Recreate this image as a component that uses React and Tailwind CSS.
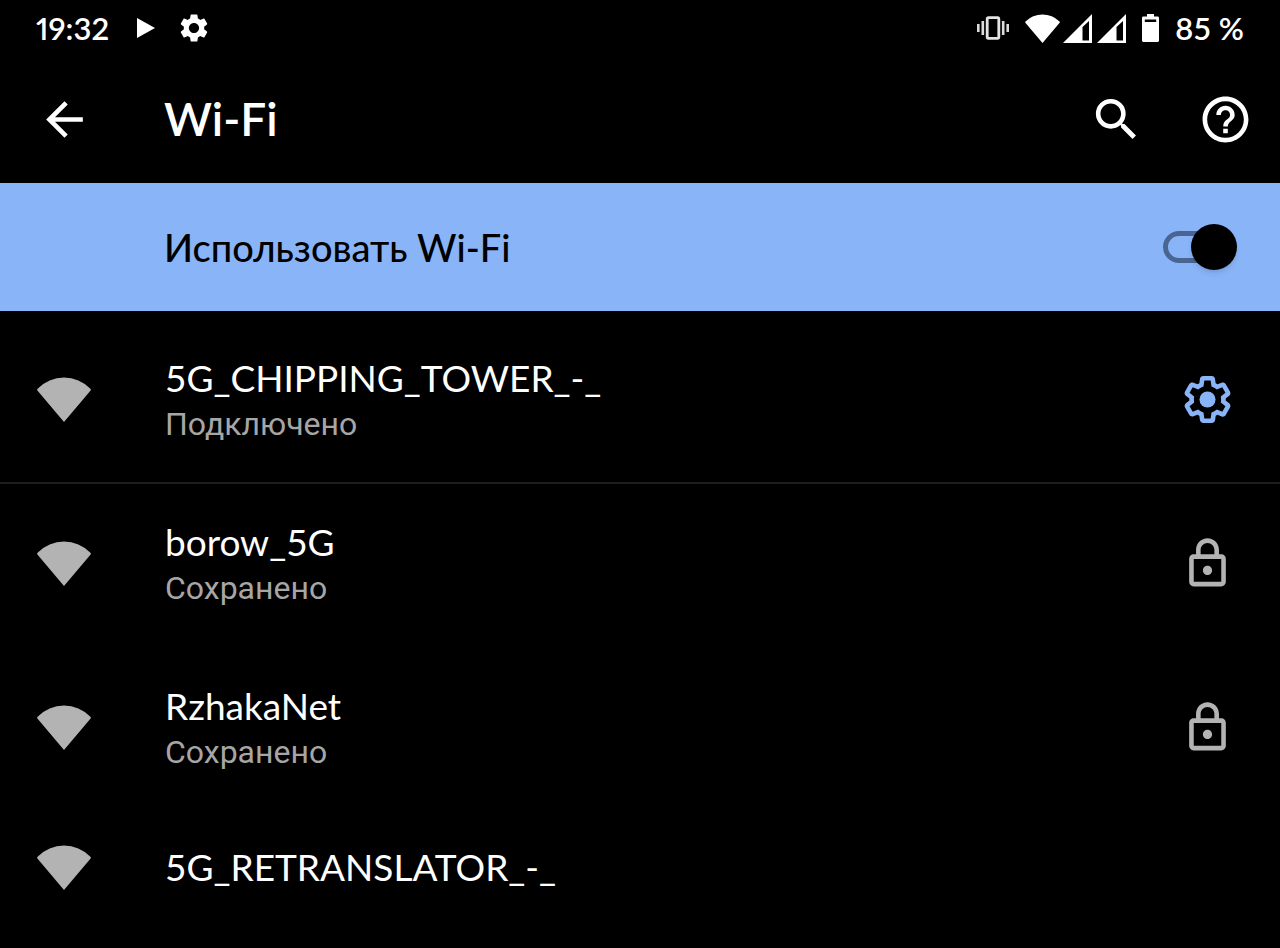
import { MdArrowBack, MdHelpOutline, MdOutlineLock, MdSearch, MdSettings } from "react-icons/md";

const networks = [
  { name: "5G_CHIPPING_TOWER_-_", status: "Подключено", action: "settings" },
  { name: "borow_5G", status: "Сохранено", action: "lock" },
  { name: "RzhakaNet", status: "Сохранено", action: "lock" },
  { name: "5G_RETRANSLATOR_-_" },
];

function WifiIcon({ className }) {
  return (
    <svg viewBox="0 0 54 45" className={className} fill="currentColor" aria-hidden="true">
      <path d="M27 45 0.4 13.4Q-0.2 12.5 0.6 11.7A37 37 0 0 1 53.4 11.7Q54.2 12.5 53.6 13.4Z" />
    </svg>
  );
}

function SignalIcon() {
  return (
    <svg viewBox="0 0 29 29" className="h-[29px] w-[29px]" aria-hidden="true">
      <path fill="white" fillRule="evenodd" d="M0 29 29 0V29ZM19.5 13V26.5H26V7Z" />
    </svg>
  );
}

function VibrateIcon() {
  return (
    <svg viewBox="0 0 32 24" className="h-6 w-8" aria-hidden="true">
      <rect x="10.2" y="1.7" width="11.6" height="20.6" rx="1.2" fill="none" stroke="#e4e4e4" strokeWidth="2.8" />
      <path d="M1.3 8v8M5.8 5v14M26.2 5v14M30.7 8v8" stroke="#dcdcdc" strokeWidth="2.6" />
    </svg>
  );
}

function BatteryIcon({ className }) {
  return (
    <svg viewBox="0 0 17 28" className={className} aria-hidden="true">
      <path
        fill="white"
        fillRule="evenodd"
        d="M5 0h7v2.6h3.6q1.4 0 1.4 1.4v22.6q0 1.4-1.4 1.4H1.4Q0 28 0 26.6V4q0-1.4 1.4-1.4H5ZM2.8 5.6v2.4h11.4V5.6Z"
      />
    </svg>
  );
}

function GearIcon({ className }) {
  return (
    <svg viewBox="0 0 24 24" className={className} fill="currentColor" aria-hidden="true">
      <path d="M13.85 22.25h-3.7c-.74 0-1.36-.54-1.45-1.27l-.27-1.89c-.27-.14-.53-.29-.79-.46l-1.8.72c-.7.26-1.47-.03-1.81-.65L2.2 15.53c-.35-.66-.2-1.44.36-1.88l1.53-1.19c-.01-.15-.02-.3-.02-.46 0-.15.01-.31.02-.46l-1.52-1.19c-.59-.45-.74-1.26-.37-1.88l1.85-3.19c.34-.62 1.11-.9 1.79-.63l1.81.73c.26-.17.52-.32.78-.46l.27-1.91c.09-.7.71-1.25 1.44-1.25h3.7c.74 0 1.36.54 1.45 1.27l.27 1.89c.27.14.53.29.79.46l1.8-.72c.71-.26 1.48.03 1.82.65l1.84 3.18c.36.66.2 1.44-.36 1.88l-1.52 1.19c.01.15.02.3.02.46s-.01.31-.02.46l1.52 1.19c.56.45.72 1.23.37 1.86l-1.86 3.22c-.34.62-1.11.9-1.8.63l-1.8-.72c-.26.17-.52.32-.78.46l-.27 1.91c-.1.68-.72 1.22-1.46 1.22zm-3.23-2h2.76l.37-2.55.53-.22c.44-.18.88-.44 1.34-.78l.45-.34 2.38.96 1.38-2.4-2.03-1.58.07-.56c.03-.26.06-.51.06-.78s-.03-.53-.06-.78l-.07-.56 2.03-1.58-1.39-2.4-2.39.96-.45-.35c-.42-.32-.87-.58-1.33-.77l-.52-.22-.37-2.55h-2.76l-.37 2.55-.53.21c-.44.19-.88.44-1.34.79l-.45.33-2.38-.95-1.39 2.39 2.03 1.58-.07.56a7 7 0 0 0-.06.79c0 .26.02.53.06.78l.07.56-2.03 1.58 1.38 2.4 2.39-.96.45.35c.43.33.86.58 1.33.77l.53.22.38 2.55z" />
      <circle cx="12" cy="12" r="3.5" />
    </svg>
  );
}

function StatusBar() {
  return (
    <div className="flex h-14 items-center justify-between px-9 font-['Lato',sans-serif] text-[31px] leading-8 font-semibold">
      <div className="flex items-center">
        <span className="proportional-nums">19:32</span>
        <svg viewBox="0 0 18 20" className="ml-7 h-5 w-[18px]" fill="white" aria-hidden="true">
          <path d="M0 0 18 10 0 20Z" />
        </svg>
        <MdSettings className="ml-[22px] h-[34px] w-[34px]" aria-hidden="true" />
      </div>
      <div className="flex items-center">
        <VibrateIcon />
        <WifiIcon className="ml-4 h-[29px] w-[35px]" />
        <div className="ml-[3px] flex gap-[5px]">
          <SignalIcon />
          <SignalIcon />
        </div>
        <BatteryIcon className="ml-4 h-7 w-[17px]" />
        <span className="ml-4">85 %</span>
      </div>
    </div>
  );
}

function NetworkRow({ name, status, action }) {
  return (
    <li className={status ? "flex h-[158px] items-center pr-[45px] pl-[37px]" : "flex h-[110px] items-center pr-[45px] pl-[37px]"}>
      <button type="button" className="flex min-w-0 flex-1 items-center gap-[74px] text-left">
        <WifiIcon className="h-[45px] w-[54px] shrink-0 text-[#b3b3b3]" />
        <span className="flex min-w-0 flex-col gap-0.5">
          <span className="font-['Lato',sans-serif] text-[37px] leading-[48px]">{name}</span>
          {status && (
            <span className="font-['Roboto',sans-serif] text-[32px] leading-10 text-[#a6a6a6]">{status}</span>
          )}
        </span>
      </button>
      {action === "settings" && (
        <button type="button" aria-label="Настройки сети" className="text-[#8ab4f8]">
          <GearIcon className="h-[55px] w-[55px]" />
        </button>
      )}
      {action === "lock" && <MdOutlineLock className="h-[55px] w-[55px] text-[#b3b3b3]" aria-hidden="true" />}
    </li>
  );
}

export default function App() {
  return (
    <div className="min-h-screen bg-black text-white">
      <StatusBar />
      <header className="flex h-[126px] items-center pr-[27px] pl-[37px]">
        <button type="button" aria-label="Назад">
          <MdArrowBack className="h-[55px] w-[55px]" />
        </button>
        <h1 className="ml-[72px] flex-1 font-['Lato',sans-serif] text-[46px] leading-[56px] font-semibold">Wi-Fi</h1>
        <div className="flex gap-[54px]">
          <button type="button" aria-label="Поиск">
            <MdSearch className="h-[55px] w-[55px]" />
          </button>
          <button type="button" aria-label="Справка">
            <MdHelpOutline className="h-[55px] w-[55px]" />
          </button>
        </div>
      </header>
      <main className="pt-px">
        <label className="flex h-32 items-center justify-between bg-[#8ab4f8] pr-11 pl-[164px] text-black">
          <span className="font-['Lato',sans-serif] text-[38px] leading-[46px] font-medium">Использовать Wi-Fi</span>
          <input type="checkbox" role="switch" defaultChecked className="peer sr-only" />
          <span className="flex h-8 w-[73px] items-center justify-start rounded-full border-[5px] border-[#4a6592] peer-checked:justify-end">
            <span className="-mr-1.5 h-[46px] w-[46px] shrink-0 rounded-full bg-black shadow-md" />
          </span>
        </label>
        <ul className="pt-[9px] pb-1">
          {networks.slice(0, 1).map((n) => (
            <NetworkRow key={n.name} {...n} />
          ))}
        </ul>
        <ul className="flex flex-col gap-1.5 border-t-2 border-[#1e1e1e]">
          {networks.slice(1).map((n) => (
            <NetworkRow key={n.name} {...n} />
          ))}
        </ul>
      </main>
    </div>
  );
}
